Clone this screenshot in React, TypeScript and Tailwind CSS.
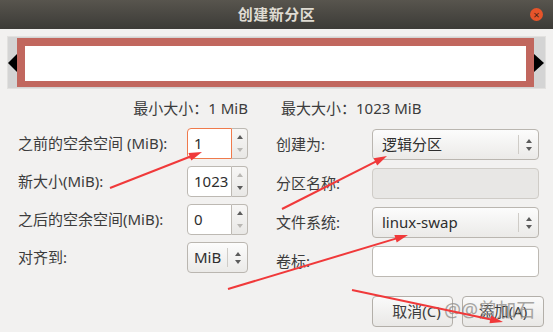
import React from "react";

const FONT = { fontFamily: '"Noto Sans", "Noto Sans CJK SC", sans-serif' };

function Up({ on }: { on: boolean }) {
  return (
    <span
      className={
        "block w-0 h-0 border-x-[3px] border-x-transparent border-b-[4px] " +
        (on ? "border-b-[#5b5b5b]" : "border-b-[#b9b7b3]")
      }
    />
  );
}

function Down({ on }: { on: boolean }) {
  return (
    <span
      className={
        "block w-0 h-0 border-x-[3px] border-x-transparent border-t-[4px] " +
        (on ? "border-t-[#5b5b5b]" : "border-t-[#b9b7b3]")
      }
    />
  );
}

function Spin({
  value,
  up,
  down,
  focus,
}: {
  value: string;
  up: boolean;
  down: boolean;
  focus?: boolean;
}) {
  return (
    <div className="flex h-[31px] w-[61px]">
      <div
        className={
          "flex items-center w-[45px] bg-white rounded-l-[4px] border pl-[6px] text-[15px] text-[#2e2e2e] " +
          (focus ? "border-[#ef7a4c]" : "border-[#bdb9b3]")
        }
      >
        {value}
      </div>
      <div className="flex flex-col items-center justify-center gap-[9px] w-[16px] rounded-r-[4px] border border-l-0 border-[#bdb9b3] bg-gradient-to-b from-[#f7f6f5] to-[#e9e8e6]">
        <Up on={up} />
        <Down on={down} />
      </div>
    </div>
  );
}

function Combo({ text, w, pad }: { text: string; w: string; pad: string }) {
  return (
    <div
      className={
        "flex items-center h-[31px] rounded-[4px] border border-[#bab6b0] bg-gradient-to-b from-[#fcfcfc] to-[#ebeae8] text-[15px] text-[#2e2e2e] " +
        w
      }
    >
      <span className={"flex-1 " + pad}>{text}</span>
      <span className="w-px h-[19px] bg-[#cfccc7]" />
      <span className="flex flex-col items-center gap-[4px] w-[19px]">
        <Up on />
        <Down on />
      </span>
    </div>
  );
}

function Arrow({ x1, y1, x2, y2 }: { x1: number; y1: number; x2: number; y2: number }) {
  const dx = x2 - x1;
  const dy = y2 - y1;
  const len = Math.hypot(dx, dy);
  const ux = dx / len;
  const uy = dy / len;
  const bx = x2 - ux * 13;
  const by = y2 - uy * 13;
  const px = -uy * 4;
  const py = ux * 4;
  return (
    <g>
      <line x1={x1} y1={y1} x2={bx + ux * 2} y2={by + uy * 2} stroke="#f0393a" strokeWidth="2" />
      <polygon
        points={`${x2},${y2} ${bx + px},${by + py} ${bx - px},${by - py}`}
        fill="#f0393a"
      />
    </g>
  );
}

export default function App() {
  return (
    <div
      className="relative w-[553px] h-[332px] overflow-hidden bg-[#f2f1f0] text-[#3c3c3c]"
      style={FONT}
    >
      {/* title bar */}
      <div className="relative flex items-center justify-center h-[29px] bg-gradient-to-b from-[#58554e] to-[#3c3b37]">
        <span className="text-[15px] font-bold text-[#dfdbd2] tracking-[0.5px]">创建新分区</span>
        <span className="absolute right-[10px] top-[8px] flex items-center justify-center w-[13px] h-[13px] rounded-full bg-[#e6542a] text-[11px] leading-none text-[#4a2416]">
          ×
        </span>
      </div>

      {/* partition map */}
      <div className="flex items-stretch mx-[7px] mt-[7px] h-[53px] border border-[#e2e1df] bg-[#d4d4d4] py-[1px]">
        <div className="flex items-center w-[9px]">
          <span className="block w-0 h-0 border-y-[9px] border-y-transparent border-r-[9px] border-r-black" />
        </div>
        <div className="flex-1 bg-[#c1675e] pt-[8px] pb-[6px] px-[8px]">
          <div className="w-full h-full bg-white" />
        </div>
        <div className="flex items-center w-[11px]">
          <span className="block w-0 h-0 border-y-[9px] border-y-transparent border-l-[10px] border-l-black" />
        </div>
      </div>

      {/* min / max */}
      <div className="flex items-center mt-[9px] h-[20px] text-[15px]">
        <span className="w-[248px] text-right">最小大小：1 MiB</span>
        <span className="ml-[33px]">最大大小：1023 MiB</span>
      </div>

      {/* fields */}
      <div className="flex mt-[10px]">
        <div className="flex flex-col gap-[7px] w-[276px] pl-[18px] text-[15px]">
          <div className="flex items-center h-[31px]">
            <span className="w-[169px]">之前的空余空间 (MiB):</span>
            <Spin value="1" up down={false} focus />
          </div>
          <div className="flex items-center h-[31px]">
            <span className="w-[169px]">新大小(MiB):</span>
            <Spin value="1023" up={false} down />
          </div>
          <div className="flex items-center h-[31px]">
            <span className="w-[169px]">之后的空余空间(MiB):</span>
            <Spin value="0" up down={false} />
          </div>
          <div className="flex items-center h-[31px]">
            <span className="w-[169px]">对齐到:</span>
            <Combo text="MiB" w="w-[61px]" pad="pl-[6px]" />
          </div>
        </div>
        <div className="flex flex-col gap-[8px] pt-[1px] text-[15px]">
          <div className="flex items-center h-[31px]">
            <span className="w-[96px]">创建为:</span>
            <Combo text="逻辑分区" w="w-[167px]" pad="pl-[9px]" />
          </div>
          <div className="flex items-center h-[31px]">
            <span className="w-[96px]">分区名称:</span>
            <div className="h-[31px] w-[167px] rounded-[4px] border border-[#cfccc7] bg-[#e8e7e5]" />
          </div>
          <div className="flex items-center h-[31px]">
            <span className="w-[96px]">文件系统:</span>
            <Combo text="linux-swap" w="w-[167px]" pad="pl-[9px]" />
          </div>
          <div className="flex items-center h-[31px]">
            <span className="w-[96px]">卷标:</span>
            <div className="h-[31px] w-[167px] rounded-[4px] border border-[#bdb9b3] bg-white" />
          </div>
        </div>
      </div>

      {/* buttons */}
      <div className="flex justify-end gap-[9px] pr-[9px] mt-[19px]">
        <button className="h-[31px] w-[81px] rounded-[4px] border border-[#b3afa9] bg-gradient-to-b from-[#fafafa] to-[#e9e8e6] pl-[8px] text-[15px] text-[#3c3c3c]">
          取消(C)
        </button>
        <button className="h-[31px] w-[82px] rounded-[4px] border border-[#b3afa9] bg-gradient-to-b from-[#fafafa] to-[#e9e8e6] text-[15px] text-[#3c3c3c]">
          添加(A)
        </button>
      </div>

      {/* watermark */}
      <span className="absolute left-[444px] top-[298px] text-[19px] leading-[24px] text-[#8d8b88] opacity-75 pointer-events-none">
        @@曾加石
      </span>

      {/* annotation arrows */}
      <svg className="absolute inset-0 pointer-events-none" width="553" height="332">
        <Arrow x1={110} y1={188} x2={202} y2={152} />
        <Arrow x1={282} y1={209} x2={387} y2={156} />
        <Arrow x1={228} y1={289} x2={408} y2={235} />
        <Arrow x1={352} y1={290} x2={503} y2={322} />
      </svg>
    </div>
  );
}
